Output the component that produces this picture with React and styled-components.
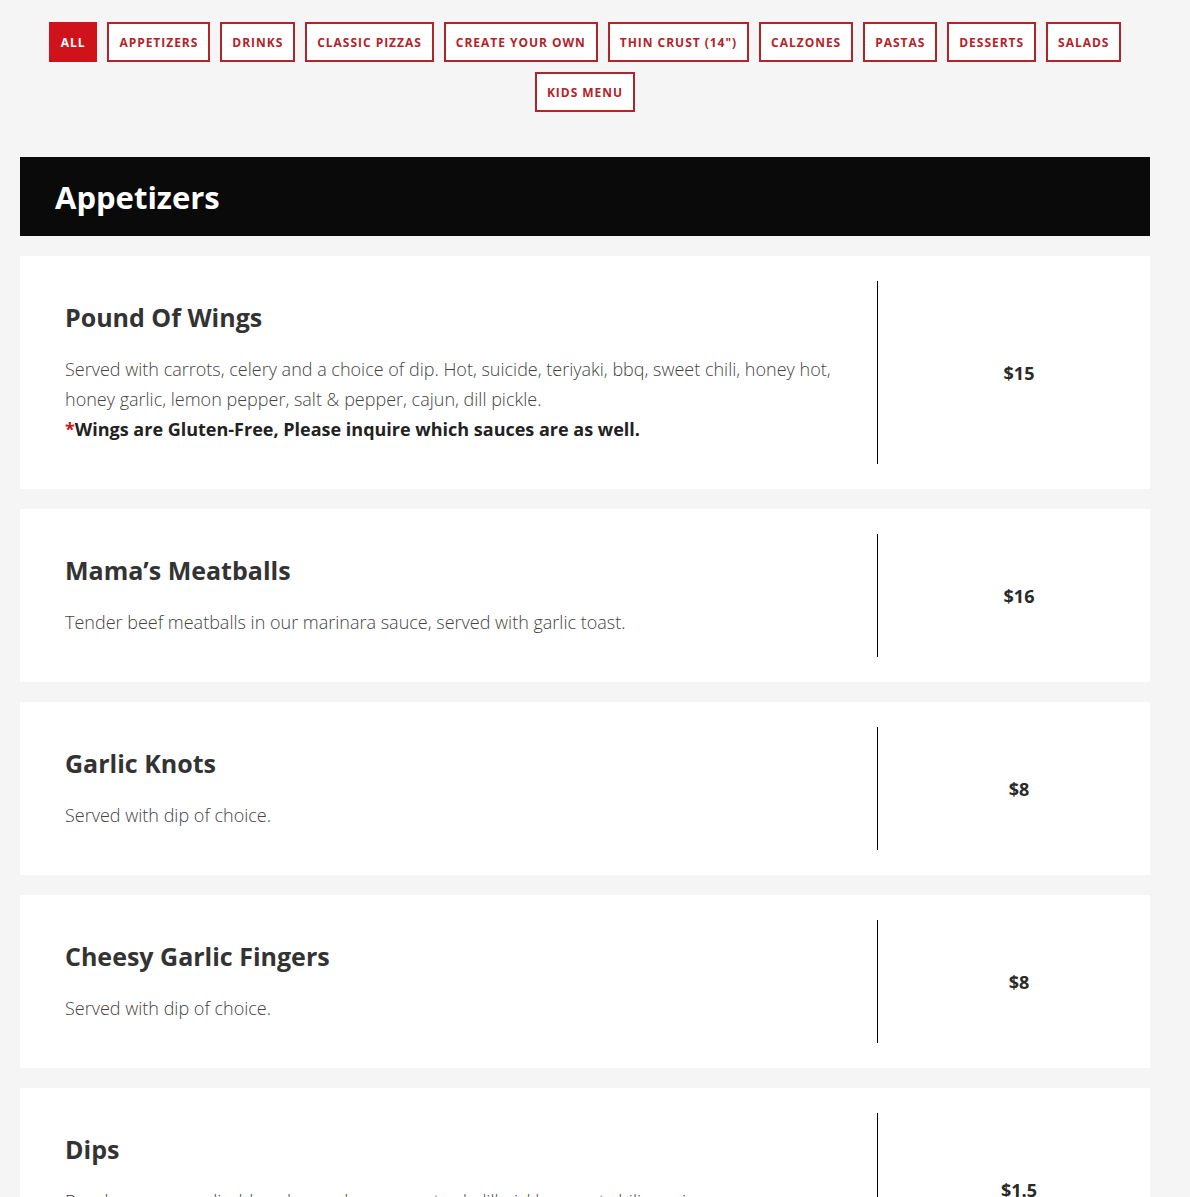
import React, { useState } from 'react';
import styled, { createGlobalStyle } from 'styled-components';

const GlobalStyle = createGlobalStyle`
  html, body {
    margin: 0;
    padding: 0;
    background: #f5f5f5;
    font-family: "Open Sans", "Liberation Sans", sans-serif;
  }
`;

const Page = styled.div`
  width: 1130px;
  margin-left: 20px;
  padding-top: 22px;
`;

const FilterBar = styled.nav`
  display: flex;
  flex-wrap: wrap;
  justify-content: center;
  gap: 10px;
  padding: 0 20px;
`;

const FilterButton = styled.button`
  height: 40px;
  box-sizing: border-box;
  padding: 0 10px;
  border: 2px solid #b3232a;
  background: ${props => (props.active ? '#d0121b' : '#fff')};
  border-color: ${props => (props.active ? '#d0121b' : '#b3232a')};
  color: ${props => (props.active ? '#fff' : '#b3232a')};
  font-family: "Open Sans", "Liberation Sans", sans-serif;
  font-size: 12px;
  font-weight: 700;
  letter-spacing: 0.97px;
  text-transform: uppercase;
  cursor: pointer;
`;

const SectionHeader = styled.h2`
  margin: 45px 0 20px;
  height: 79px;
  display: flex;
  align-items: center;
  padding: 0 35px;
  background: #0a0a0a;
  color: #fff;
  font-size: 31px;
  font-weight: 700;
`;

const ItemList = styled.div`
  display: flex;
  flex-direction: column;
  gap: 20px;
`;

const Card = styled.article`
  display: flex;
  background: #fff;
  padding: 25px 0 25px 45px;
`;

const Info = styled.div`
  flex: 1;
  padding: 20px 20px 20px 0;
  border-right: 1px solid #000;
`;

const Title = styled.h3`
  margin: 0 0 20px;
  font-size: 25px;
  line-height: 33px;
  font-weight: 700;
  color: #333;
`;

const Description = styled.p`
  margin: 0;
  font-size: 18px;
  line-height: 30px;
  font-weight: 300;
  color: #444;
`;

const Note = styled.p`
  margin: 0;
  font-size: 18px;
  line-height: 30px;
  font-weight: 700;
  color: #222;

  span {
    color: #d0121b;
  }
`;

const Price = styled.div`
  width: 272px;
  box-sizing: border-box;
  padding-left: 10px;
  display: flex;
  align-items: center;
  justify-content: center;
  font-size: 18px;
  font-weight: 700;
  color: #2a2a2a;
`;

const categories = [
  'All',
  'Appetizers',
  'Drinks',
  'Classic Pizzas',
  'Create Your Own',
  'Thin Crust (14")',
  'Calzones',
  'Pastas',
  'Desserts',
  'Salads',
  'Kids Menu',
];

const items = [
  {
    name: 'Pound Of Wings',
    text: 'Served with carrots, celery and a choice of dip. Hot, suicide, teriyaki, bbq, sweet chili, honey hot, honey garlic, lemon pepper, salt & pepper, cajun, dill pickle.',
    note: 'Wings are Gluten-Free, Please inquire which sauces are as well.',
    price: '$15',
  },
  {
    name: 'Mama’s Meatballs',
    text: 'Tender beef meatballs in our marinara sauce, served with garlic toast.',
    price: '$16',
  },
  { name: 'Garlic Knots', text: 'Served with dip of choice.', price: '$8' },
  { name: 'Cheesy Garlic Fingers', text: 'Served with dip of choice.', price: '$8' },
  {
    name: 'Dips',
    text: 'Ranch, creamy garlic, blue cheese, honey mustard, dill pickle, sweet chili, marinara, sour cream, salsa, chipotle mayo, tzatziki and donair sauce.',
    price: '$1.5',
  },
];

function App() {
  const [active, setActive] = useState('All');

  return (
    <Page>
      <GlobalStyle />
      <FilterBar>
        {categories.map(c => (
          <FilterButton key={c} active={c === active} onClick={() => setActive(c)}>
            {c}
          </FilterButton>
        ))}
      </FilterBar>
      <SectionHeader>Appetizers</SectionHeader>
      <ItemList>
        {items.map(item => (
          <Card key={item.name}>
            <Info>
              <Title>{item.name}</Title>
              <Description>{item.text}</Description>
              {item.note && (
                <Note>
                  <span>*</span>
                  {item.note}
                </Note>
              )}
            </Info>
            <Price>{item.price}</Price>
          </Card>
        ))}
      </ItemList>
    </Page>
  );
}

export default App;
